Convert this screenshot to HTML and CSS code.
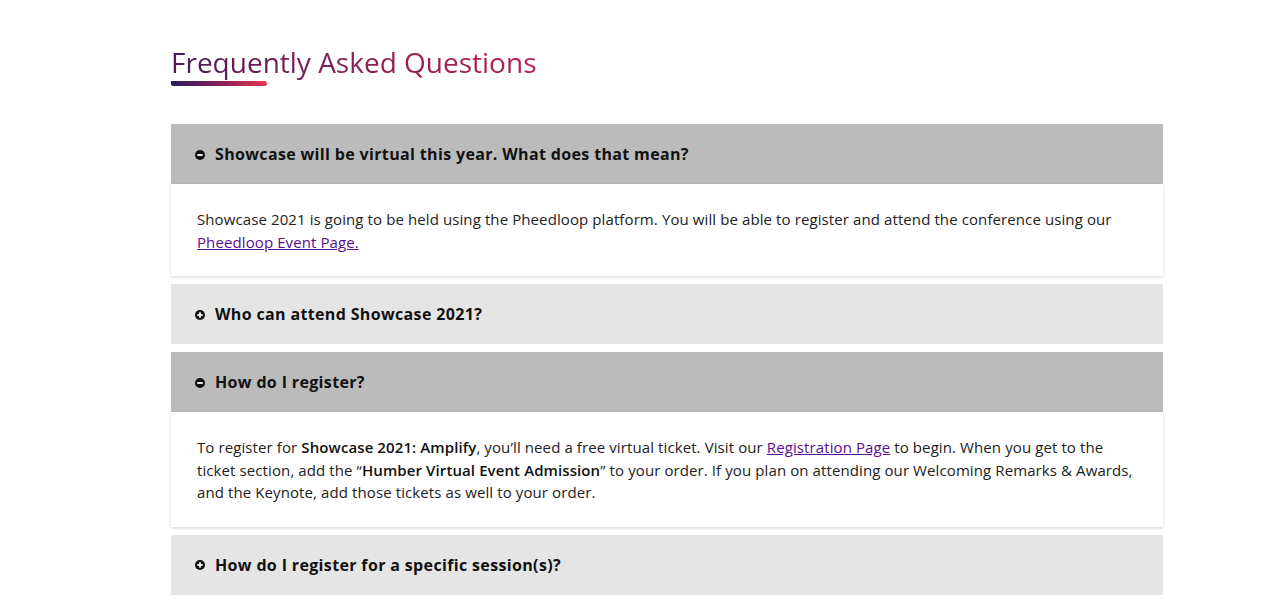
FILE: index.html
```html
<!DOCTYPE html>
<html lang="en">
<head>
<meta charset="utf-8">
<title>FAQ</title>
<link rel="stylesheet" href="styles.css">
</head>
<body>
<main class="faq">
  <h1 class="faq-title">Frequently Asked Questions</h1>
  <div class="faq-bar"></div>
  <div class="accordion">
    <section class="item open">
      <div class="item-head">
        <svg class="icon" viewBox="0 0 10 10" width="10" height="10"><circle cx="5" cy="5" r="5" fill="#111"/><rect x="2.3" y="4.1" width="5.4" height="1.8" fill="#fff"/></svg>
        <span>Showcase will be virtual this year. What does that mean?</span>
      </div>
      <div class="item-body">
        <p>Showcase 2021 is going to be held using the Pheedloop platform. You will be able to register and attend the conference using our <a href="#">Pheedloop Event Page.</a></p>
      </div>
    </section>
    <section class="item">
      <div class="item-head">
        <svg class="icon" viewBox="0 0 10 10" width="10" height="10"><circle cx="5" cy="5" r="5" fill="#111"/><rect x="2.3" y="4.1" width="5.4" height="1.8" fill="#fff"/><rect x="4.1" y="2.3" width="1.8" height="5.4" fill="#fff"/></svg>
        <span>Who can attend Showcase 2021?</span>
      </div>
    </section>
    <section class="item open">
      <div class="item-head">
        <svg class="icon" viewBox="0 0 10 10" width="10" height="10"><circle cx="5" cy="5" r="5" fill="#111"/><rect x="2.3" y="4.1" width="5.4" height="1.8" fill="#fff"/></svg>
        <span>How do I register?</span>
      </div>
      <div class="item-body">
        <p>To register for <strong>Showcase 2021: Amplify</strong>, you’ll need a free virtual ticket. Visit our <a href="#">Registration Page</a> to begin. When you get to the ticket section, add the “<strong>Humber Virtual Event Admission</strong>” to your order. If you plan on attending our Welcoming Remarks &amp; Awards, and the Keynote, add those tickets as well to your order.</p>
      </div>
    </section>
    <section class="item">
      <div class="item-head">
        <svg class="icon" viewBox="0 0 10 10" width="10" height="10"><circle cx="5" cy="5" r="5" fill="#111"/><rect x="2.3" y="4.1" width="5.4" height="1.8" fill="#fff"/><rect x="4.1" y="2.3" width="1.8" height="5.4" fill="#fff"/></svg>
        <span>How do I register for a specific session(s)?</span>
      </div>
    </section>
  </div>
</main>
</body>
</html>
```

FILE: styles.css
```css
html, body {
  margin: 0;
  padding: 0;
  background: #fff;
}
body {
  font-family: "Open Sans", "Liberation Sans", sans-serif;
  color: #222;
}
.faq {
  width: 992px;
  margin: 0 0 0 171px;
  padding-top: 43px;
}
.faq-title {
  margin: 0;
  font-size: 28px;
  font-weight: 500;
  line-height: 38px;
  display: inline-block;
  background: linear-gradient(90deg, #4b1c5c 0%, #8a1f55 50%, #b8204c 100%);
  -webkit-background-clip: text;
  background-clip: text;
  color: transparent;
}
.faq-bar {
  width: 96px;
  height: 5px;
  margin-top: 0;
  border-radius: 0 3px 3px 3px;
  background: linear-gradient(90deg, #2b1a5f 0%, #8c2057 55%, #ec3750 100%);
}
.accordion {
  margin-top: 38px;
  display: flex;
  flex-direction: column;
  gap: 8px;
}
.item-head {
  display: flex;
  align-items: center;
  gap: 10px;
  height: 60px;
  padding: 0 24px;
  background: #e5e5e5;
  font-size: 16px;
  font-weight: 700;
  color: #111;
  letter-spacing: 0.35px;
}
.item.open .item-head {
  background: #bbbbbb;
}
.icon {
  flex: none;
  margin-top: 1px;
}
.item-body {
  background: #fff;
  box-shadow: 0 1px 3px rgba(0,0,0,0.18);
  padding: 24px 25px 23px 26px;
}
.item-body p {
  margin: 0;
  font-size: 15px;
  line-height: 22.5px;
  color: #222;
  letter-spacing: 0.1px;
}
.item-body strong {
  font-weight: 600;
  color: #111;
}
.item-body a {
  color: #5b0e91;
  text-decoration: underline;
}
```
